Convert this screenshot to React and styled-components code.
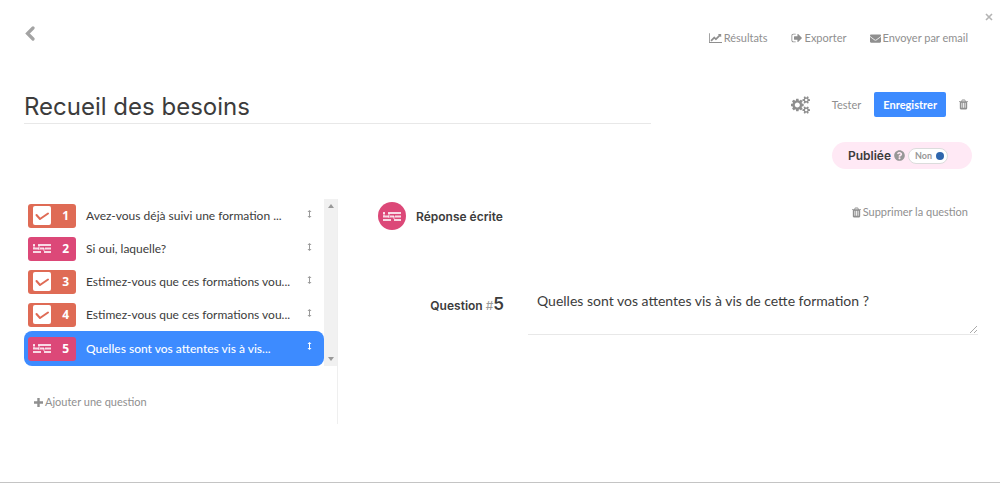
import styled, { createGlobalStyle } from "styled-components";
import { FaEnvelope, FaQuestionCircle } from "react-icons/fa";

const GlobalStyle = createGlobalStyle`
  *, *::before, *::after {
    box-sizing: border-box;
  }
  body {
    margin: 0;
    background: #fff;
    color: #3c3c3c;
    font-family: Lato, "Liberation Sans", sans-serif;
    font-size: 12px;
  }
  button, input, textarea {
    font: inherit;
    color: inherit;
    margin: 0;
    padding: 0;
    border: 0;
    background: none;
  }
  button {
    cursor: pointer;
  }
`;

const Page = styled.main`
  position: relative;
  min-height: 100vh;
  padding: 24px 32px 32px 24px;
  border-bottom: 1px solid #c4c4c4;
`;

const CloseButton = styled.button`
  position: absolute;
  top: 13px;
  right: 7px;
  display: flex;
  color: #b4b4b4;
`;

const TopBar = styled.header`
  display: flex;
  align-items: flex-start;
  justify-content: space-between;
  height: 65px;
`;

const BackButton = styled.button`
  display: flex;
  padding: 2px 1px;
  color: #a3a3a3;
`;

const Nav = styled.nav`
  display: flex;
  gap: 23px;
  padding-top: 6px;
`;

const ActionLink = styled.a`
  display: inline-flex;
  align-items: center;
  gap: 2px;
  color: #8f8f8f;
  font-size: 11px;
  line-height: 16px;
  text-decoration: none;
`;

const TitleRow = styled.div`
  display: flex;
  justify-content: space-between;
  align-items: flex-start;
`;

const TitleInput = styled.input`
  flex: 0 1 627px;
  min-width: 0;
  height: 35px;
  font-family: Inter, sans-serif;
  font-size: 24px;
  border-bottom: 1px solid #e8e8e8;
  outline: none;
`;

const Actions = styled.div`
  display: flex;
  align-items: center;
  padding-top: 3px;
  color: #8f8f8f;
  font-size: 11px;
`;

const IconButton = styled.button`
  display: flex;
`;

const TestButton = styled.button`
  margin: 0 13px 0 22px;
`;

const SaveButton = styled.button`
  height: 25px;
  padding: 0 9px;
  margin-right: 13px;
  border-radius: 2px;
  background: #3d8bff;
  color: #fff;
  font-weight: 700;
`;

const PublishRow = styled.div`
  display: flex;
  justify-content: flex-end;
  margin: 18px -4px 0 0;
`;

const Publish = styled.div`
  display: flex;
  align-items: center;
  gap: 3px;
  width: 140px;
  height: 27px;
  padding-left: 16px;
  border-radius: 14px;
  background: #ffe9f5;
  color: #979797;
`;

const PublishLabel = styled.label`
  color: #3c3c3c;
  font-family: Inter, sans-serif;
  font-size: 12px;
  font-weight: 600;
`;

const Switch = styled.span`
  position: relative;
  display: flex;
  flex-shrink: 0;
  align-items: center;
  justify-content: space-between;
  width: 40px;
  height: 16px;
  padding: 0 3px 0 6px;
  border: 1px solid #dcdcdc;
  border-radius: 8px;
  background: #fff;
  font-size: 9px;
  font-weight: 700;
`;

const SwitchInput = styled.input`
  position: absolute;
  inset: 0;
  width: 100%;
  height: 100%;
  opacity: 0;
`;

const Knob = styled.span`
  width: 8px;
  height: 8px;
  border-radius: 50%;
  background: #2f66ad;
`;

const Columns = styled.div`
  display: flex;
  margin-top: 30px;
`;

const Sidebar = styled.aside`
  flex: 0 0 314px;
  min-height: 225px;
  border-right: 1px solid #efefef;
`;

const ListArea = styled.div`
  display: flex;
`;

const QuestionList = styled.ol`
  flex: 1;
  min-width: 0;
  margin: 0;
  padding: 0;
  list-style: none;
`;

const QuestionItem = styled.li`
  display: flex;
  align-items: center;
  height: ${({ $active }) => ($active ? 35 : 33)}px;
  padding: 0 12px 0 4px;
  border-radius: 8px;
  background: ${({ $active }) => ($active ? "#3d8bff" : "transparent")};
  color: ${({ $active }) => ($active ? "#fff" : "#3c3c3c")};
  font-weight: ${({ $active }) => ($active ? 500 : 400)};
`;

const Badge = styled.span`
  display: flex;
  align-items: center;
  justify-content: space-between;
  width: 48px;
  height: 24px;
  padding: 0 7px 0 5px;
  border-radius: 3px;
  background: ${({ $kind }) => ($kind === "check" ? "#df6b55" : "#dc4878")};
  color: #fff;
  font-family: "Open Sans", sans-serif;
  font-weight: 700;
`;

const ItemText = styled.span`
  flex: 1;
  min-width: 0;
  margin-left: 10px;
  white-space: nowrap;
`;

const Handle = styled.svg`
  align-self: flex-start;
  margin-top: 11px;
  color: ${({ $active }) => ($active ? "#fff" : "#9a9a9a")};
`;

const Scrollbar = styled.div`
  display: flex;
  flex-direction: column;
  justify-content: space-between;
  align-items: center;
  width: 13px;
  padding: 5px 0;
  background: #f1f1f1;
`;

const AddQuestion = styled.div`
  padding: 28px 0 0 10px;
`;

const Editor = styled.section`
  flex: 1;
  min-width: 0;
  padding-left: 40px;
`;

const EditorHeader = styled.div`
  display: flex;
  align-items: flex-start;
  justify-content: space-between;
`;

const TypeTitle = styled.h2`
  display: flex;
  align-items: center;
  gap: 10px;
  margin: 3px 0 0;
  font-family: Inter, sans-serif;
  font-size: 12px;
  font-weight: 600;
`;

const TypeIcon = styled.span`
  display: flex;
  align-items: center;
  justify-content: center;
  width: 28px;
  height: 28px;
  border-radius: 50%;
  background: #dc4878;
`;

const DeleteWrapper = styled.div`
  padding-top: 5px;
`;

const QuestionRow = styled.div`
  display: flex;
  margin: 52px -10px 0 0;
`;

const QuestionLabel = styled.label`
  flex: 0 0 150px;
  padding: 12px 24px 0 0;
  text-align: right;
  font-family: Inter, sans-serif;
  font-size: 12px;
  font-weight: 600;
  line-height: 20px;
`;

const Hash = styled.span`
  color: #999;
  font-weight: 400;
`;

const Number = styled.span`
  font-size: 17px;
`;

const TextBox = styled.div`
  position: relative;
  display: flex;
  flex: 1;
  min-width: 0;
`;

const QuestionText = styled.textarea`
  flex: 1;
  min-width: 0;
  height: 53px;
  padding: 9px;
  border-bottom: 1px solid #e8e8e8;
  font-size: 14px;
  line-height: 20px;
  outline: none;
  resize: none;
`;

const Grip = styled.svg`
  position: absolute;
  right: 0;
  bottom: 1px;
`;

const ChartIcon = () => (
  <svg width="13" height="12" viewBox="0 0 2048 1792" fill="currentColor">
    <path d="M2048 1536v128h-2048v-1536h128v1408h1920zM1920 288v435q0 21-19.500 29.500t-35.500-7.500l-121-121-633 633q-10 10-23 10t-23-10l-233-233-416 416-192-192 585-585q10-10 23-10t23 10l233 233 464-464-121-121q-16-16-7.500-35.500t29.500-19.500h435q14 0 23 9t9 23z" />
  </svg>
);

const ExportIcon = () => (
  <svg width="12" height="12" viewBox="0 0 1792 1792" fill="currentColor">
    <path d="M704 1440q0 4 1 20t.5 26.500-3 23.500-10 19.500-20.500 6.500h-320q-119 0-203.500-84.500t-84.500-203.500v-704q0-119 84.500-203.500t203.500-84.500h320q13 0 22.500 9.500t9.500 22.500q0 4 1 20t.5 26.500-3 23.500-10 19.500-20.500 6.500h-320q-66 0-113 47t-47 113v704q0 66 47 113t113 47h312l11.500 1 11.500 3 8 5.500 7 9 2 13.500zm928-544q0 26-19 45l-544 544q-19 19-45 19t-45-19-19-45v-288h-448q-26 0-45-19t-19-45v-384q0-26 19-45t45-19h448v-288q0-26 19-45t45-19 45 19l544 544q19 19 19 45z" />
  </svg>
);

const TrashIcon = () => (
  <svg width="9" height="11" viewBox="192 128 1408 1536" fill="currentColor">
    <path d="M704 1376v-704q0-14-9-23t-23-9h-64q-14 0-23 9t-9 23v704q0 14 9 23t23 9h64q14 0 23-9t9-23zm256 0v-704q0-14-9-23t-23-9h-64q-14 0-23 9t-9 23v704q0 14 9 23t23 9h64q14 0 23-9t9-23zm256 0v-704q0-14-9-23t-23-9h-64q-14 0-23 9t-9 23v704q0 14 9 23t23 9h64q14 0 23-9t9-23zm-544-992h448l-48-117q-7-9-17-11h-317q-10 2-17 11zm928 32v64q0 14-9 23t-23 9h-96v948q0 83-47 143.500t-113 60.500h-832q-66 0-113-58.500t-47-141.500v-952h-96q-14 0-23-9t-9-23v-64q0-14 9-23t23-9h309l70-167q15-37 54-63t79-26h320q40 0 79 26t54 63l70 167h309q14 0 23 9t9 23z" />
  </svg>
);

const GearsIcon = () => (
  <svg width="19" height="18" viewBox="0 0 1920 1792" fill="currentColor">
    <path d="M896 896q0-106-75-181t-181-75-181 75-75 181 75 181 181 75 181-75 75-181zm768 512q0-52-38-90t-90-38-90 38-38 90q0 53 37.500 90.500t90.500 37.500 90.500-37.500 37.500-90.500zm0-1024q0-52-38-90t-90-38-90 38-38 90q0 53 37.500 90.500t90.500 37.500 90.500-37.500 37.500-90.500zm-384 421v185q0 10-7 19.500t-16 10.500l-155 24q-11 35-32 76 34 48 90 115 7 10 7 20 0 12-7 19-23 30-82.500 89.500t-78.500 59.500q-11 0-21-7l-115-90q-37 19-77 31-11 108-23 155-7 24-30 24h-186q-11 0-20-7.500t-10-17.500l-23-153q-34-10-75-31l-118 89q-7 7-20 7-11 0-21-8-144-133-144-160 0-9 7-19 10-14 41-53t47-61q-23-44-35-82l-152-24q-10-1-17-9.500t-7-19.500v-185q0-10 7-19.500t16-10.500l155-24q11-35 32-76-34-48-90-115-7-11-7-20 0-12 7-20 22-30 82-89t79-59q11 0 21 7l115 90q34-18 77-32 11-108 23-154 7-24 30-24h186q11 0 20 7.500t10 17.500l23 153q34 10 75 31l118-89q8-7 20-7 11 0 21 8 144 133 144 160 0 9-7 19-12 16-42 54t-45 60q23 48 34 82l152 23q10 2 17 10.500t7 19.500zm640 533v140q0 16-149 31-12 27-30 52 51 113 51 138 0 4-4 7-122 71-124 71-8 0-46-47t-52-68q-20 2-30 2t-30-2q-14 21-52 68t-46 47q-2 0-124-71-4-3-4-7 0-25 51-138-18-25-30-52-149-15-149-31v-140q0-16 149-31 13-29 30-52-51-113-51-138 0-4 4-7 4-2 35-20t59-34 30-16q8 0 46 46.500t52 67.500q20-2 30-2t30 2q51-71 92-112l6-2q4 0 124 70 4 3 4 7 0 25-51 138 17 23 30 52 149 15 149 31zm0-1024v140q0 16-149 31-12 27-30 52 51 113 51 138 0 4-4 7-122 71-124 71-8 0-46-47t-52-68q-20 2-30 2t-30-2q-14 21-52 68t-46 47q-2 0-124-71-4-3-4-7 0-25 51-138-18-25-30-52-149-15-149-31v-140q0-16 149-31 13-29 30-52-51-113-51-138 0-4 4-7 4-2 35-20t59-34 30-16q8 0 46 46.500t52 67.500q20-2 30-2t30 2q51-71 92-112l6-2q4 0 124 70 4 3 4 7 0 25-51 138 17 23 30 52 149 15 149 31z" />
  </svg>
);

const ChevronIcon = () => (
  <svg width="10" height="15" viewBox="0 0 10 15" fill="none" stroke="currentColor">
    <path d="M8 2L2.500 7.500L8 13" strokeWidth="3.200" strokeLinecap="round" />
  </svg>
);

const CrossIcon = () => (
  <svg width="8" height="8" viewBox="0 0 8 8" fill="none" stroke="currentColor">
    <path d="M1 1l6 6M7 1l-6 6" strokeWidth="1.600" />
  </svg>
);

const PlusIcon = () => (
  <svg width="9" height="9" viewBox="0 0 9 9" fill="none" stroke="currentColor">
    <path d="M4.500 0v9M0 4.500h9" strokeWidth="2.400" />
  </svg>
);

const CheckIcon = () => (
  <svg width="18" height="19" viewBox="0 0 18 19">
    <rect width="18" height="19" rx="2" fill="#fff" />
    <path
      d="M3.500 9l3.500 4 8-5.500"
      fill="none"
      stroke="#df6b55"
      strokeWidth="2"
      strokeLinecap="round"
      strokeLinejoin="round"
    />
  </svg>
);

const WrittenIcon = () => (
  <svg width="18" height="9" viewBox="0 0 18 9" fill="none" stroke="#fff">
    <path d="M0 1h2M5 1h13M0 4.500h6M7 4.500h4M12 4.500h6M0 8h8M11 8h7" strokeWidth="2" opacity="0.800" />
    <path d="M1 1v3M6 1v5M11 4v3" strokeWidth="1.500" opacity="0.500" />
  </svg>
);

const MoveIcon = ({ active }) => (
  <Handle $active={active} width="5" height="8" viewBox="0 0 5 8" fill="currentColor">
    <path d="M2.500 0L4.500 2H3V6H4.500L2.500 8L.5 6H2V2H.5z" />
  </Handle>
);

const questions = [
  { kind: "check", text: "Avez-vous déjà suivi une formation ..." },
  { kind: "written", text: "Si oui, laquelle?" },
  { kind: "check", text: "Estimez-vous que ces formations vou..." },
  { kind: "check", text: "Estimez-vous que ces formations vou..." },
  { kind: "written", text: "Quelles sont vos attentes vis à vis...", active: true },
];

const App = () => {
  return (
    <Page>
      <GlobalStyle />
      <CloseButton aria-label="Fermer">
        <CrossIcon />
      </CloseButton>

      <TopBar>
        <BackButton aria-label="Retour">
          <ChevronIcon />
        </BackButton>
        <Nav>
          <ActionLink href="#resultats">
            <ChartIcon />
            Résultats
          </ActionLink>
          <ActionLink href="#exporter">
            <ExportIcon />
            Exporter
          </ActionLink>
          <ActionLink href="#email">
            <FaEnvelope size={11} />
            Envoyer par email
          </ActionLink>
        </Nav>
      </TopBar>

      <TitleRow>
        <TitleInput aria-label="Titre" defaultValue="Recueil des besoins" />
        <Actions>
          <IconButton aria-label="Paramètres">
            <GearsIcon />
          </IconButton>
          <TestButton>Tester</TestButton>
          <SaveButton>Enregistrer</SaveButton>
          <IconButton aria-label="Supprimer">
            <TrashIcon />
          </IconButton>
        </Actions>
      </TitleRow>

      <PublishRow>
        <Publish>
          <PublishLabel htmlFor="published">Publiée</PublishLabel>
          <FaQuestionCircle size={11} />
          <Switch>
            <SwitchInput id="published" type="checkbox" />
            Non
            <Knob />
          </Switch>
        </Publish>
      </PublishRow>

      <Columns>
        <Sidebar>
          <ListArea>
            <QuestionList>
              {questions.map(({ kind, text, active }, index) => (
                <QuestionItem key={index} $active={active}>
                  <Badge $kind={kind}>
                    {kind === "check" ? <CheckIcon /> : <WrittenIcon />}
                    {index + 1}
                  </Badge>
                  <ItemText>{text}</ItemText>
                  <MoveIcon active={active} />
                </QuestionItem>
              ))}
            </QuestionList>
            <Scrollbar>
              <svg width="6" height="4" fill="#999">
                <path d="M0 4L3 0L6 4z" />
              </svg>
              <svg width="6" height="4" fill="#999">
                <path d="M0 0H6L3 4z" />
              </svg>
            </Scrollbar>
          </ListArea>
          <AddQuestion>
            <ActionLink href="#ajouter">
              <PlusIcon />
              Ajouter une question
            </ActionLink>
          </AddQuestion>
        </Sidebar>

        <Editor>
          <EditorHeader>
            <TypeTitle>
              <TypeIcon>
                <WrittenIcon />
              </TypeIcon>
              Réponse écrite
            </TypeTitle>
            <DeleteWrapper>
              <ActionLink href="#supprimer">
                <TrashIcon />
                Supprimer la question
              </ActionLink>
            </DeleteWrapper>
          </EditorHeader>
          <QuestionRow>
            <QuestionLabel htmlFor="question">
              Question <Hash>#</Hash>
              <Number>5</Number>
            </QuestionLabel>
            <TextBox>
              <QuestionText
                id="question"
                defaultValue="Quelles sont vos attentes vis à vis de cette formation ?"
              />
              <Grip width="8" height="8" viewBox="0 0 8 8" stroke="#aaa">
                <path d="M0 7L7 0M4 7L7 4" />
              </Grip>
            </TextBox>
          </QuestionRow>
        </Editor>
      </Columns>
    </Page>
  );
};

export default App;
